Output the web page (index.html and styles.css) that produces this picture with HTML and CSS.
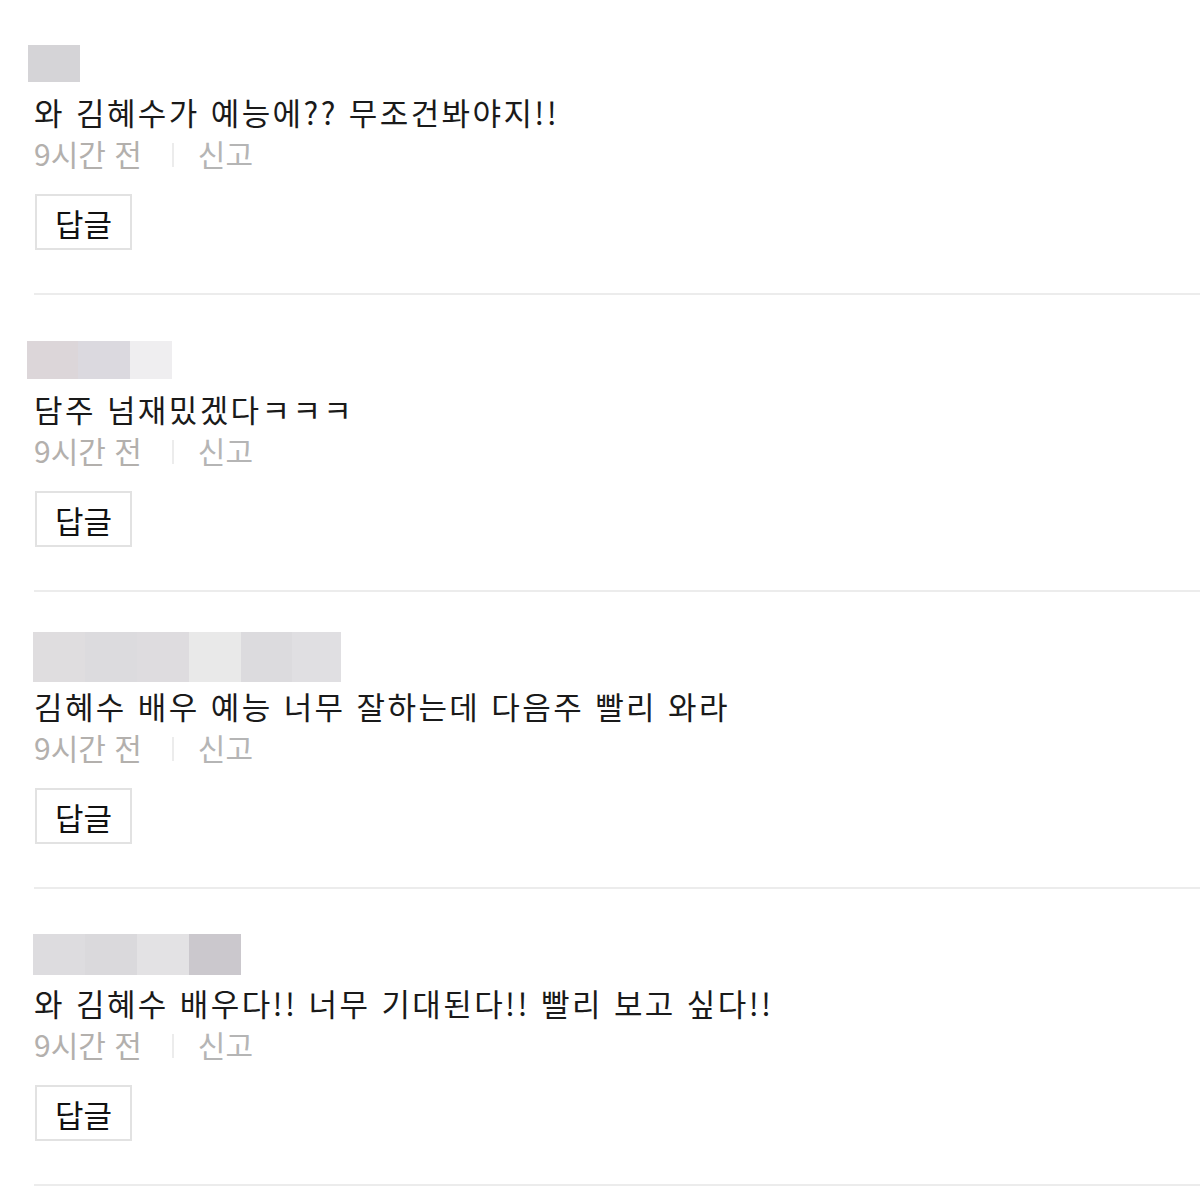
FILE: index.html
```html
<!DOCTYPE html>
<html lang="ko">
<head>
<meta charset="utf-8">
<title>댓글</title>
<link rel="stylesheet" href="styles.css">
</head>
<body>
<ul class="comments">
  <li class="comment">
    <div class="author">
      <div class="mosaic mosaic--shift h37">
        <span class="px c1 w52"></span>
      </div>
    </div>
    <p class="body">와 김혜수가 예능에?? 무조건봐야지!!</p>
    <div class="meta"><span class="time">9시간 전</span><span class="sep"></span><a class="report">신고</a></div>
    <button class="reply" type="button">답글</button>
  </li>
  <li class="comment">
    <div class="author">
      <div class="mosaic mosaic--shift2 h38">
        <span class="px c2 w51"></span><span class="px c3 w52"></span><span class="px c4 w42"></span>
      </div>
    </div>
    <p class="body">담주 넘재밌겠다ㅋㅋㅋ</p>
    <div class="meta"><span class="time">9시간 전</span><span class="sep"></span><a class="report">신고</a></div>
    <button class="reply" type="button">답글</button>
  </li>
  <li class="comment">
    <div class="author">
      <div class="mosaic mosaic--shift1 h50">
        <span class="px c5 w52"></span><span class="px c6 w52"></span><span class="px c7 w52"></span><span class="px c8 w52"></span><span class="px c6 w51"></span><span class="px c9 w49"></span>
      </div>
    </div>
    <p class="body">김혜수 배우 예능 너무 잘하는데 다음주 빨리 와라</p>
    <div class="meta"><span class="time">9시간 전</span><span class="sep"></span><a class="report">신고</a></div>
    <button class="reply" type="button">답글</button>
  </li>
  <li class="comment">
    <div class="author">
      <div class="mosaic mosaic--shift1 h41">
        <span class="px c10 w52"></span><span class="px c11 w52"></span><span class="px c12 w52"></span><span class="px c13 w52"></span>
      </div>
    </div>
    <p class="body">와 김혜수 배우다!! 너무 기대된다!! 빨리 보고 싶다!!</p>
    <div class="meta"><span class="time">9시간 전</span><span class="sep"></span><a class="report">신고</a></div>
    <button class="reply" type="button">답글</button>
  </li>
</ul>
</body>
</html>
```
FILE: styles.css
```css
html, body {
  margin: 0;
  padding: 0;
  background: #ffffff;
}

body {
  font-family: "Noto Sans CJK KR", "Noto Sans", sans-serif;
  color: #1c1c1c;
}

.comments {
  list-style: none;
  margin: 0;
  padding: 0 0 0 34px;
}

.comment {
  display: flex;
  flex-direction: column;
  align-items: flex-start;
  padding: 38px 0 43px;
  border-bottom: 2px solid #ececec;
}

.comment:first-child {
  padding-top: 36px;
}

.author {
  height: 54px;
  display: flex;
  align-items: center;
}

.mosaic {
  display: flex;
}

.mosaic--shift { margin-left: -6px; }
.mosaic--shift2 { margin-left: -7px; }
.mosaic--shift1 { margin-left: -1px; }

.h37 { height: 37px; }
.h38 { height: 38px; }
.h41 { height: 41px; }
.h50 { height: 50px; }

.px { display: block; height: 100%; }
.w42 { width: 42px; }
.w49 { width: 49px; }
.w51 { width: 51px; }
.w52 { width: 52px; }

.c1 { background: #d5d4d7; }
.c2 { background: #dcd6d9; }
.c3 { background: #dbd9df; }
.c4 { background: #efeef0; }
.c5 { background: #dfdddf; }
.c6 { background: #dcdbde; }
.c7 { background: #dedcdf; }
.c8 { background: #e9e9e9; }
.c9 { background: #e0dfe2; }
.c10 { background: #dddcdf; }
.c11 { background: #dad9dc; }
.c12 { background: #e3e2e4; }
.c13 { background: #cbc8cd; }

.body {
  margin: 2px 0 0;
  font-size: 31px;
  line-height: 40px;
  letter-spacing: 2.4px;
  color: #1a1a1a;
}

.meta {
  display: flex;
  align-items: center;
  margin-top: 1px;
  height: 40px;
  font-size: 30px;
  color: #b2b2b2;
}

.time { color: #b3b0ad; }

.sep {
  display: block;
  width: 2px;
  height: 24px;
  margin: 4px 24px 0 30px;
  background: #ececec;
}

.report { color: #b5b5b5; }

.reply {
  margin-top: 21px;
  margin-left: 1px;
  height: 56px;
  padding: 0 18px;
  border: 2px solid #e2e2e2;
  background: #ffffff;
  font-family: inherit;
  font-size: 31px;
  line-height: 1;
  color: #111111;
  cursor: pointer;
}
```
